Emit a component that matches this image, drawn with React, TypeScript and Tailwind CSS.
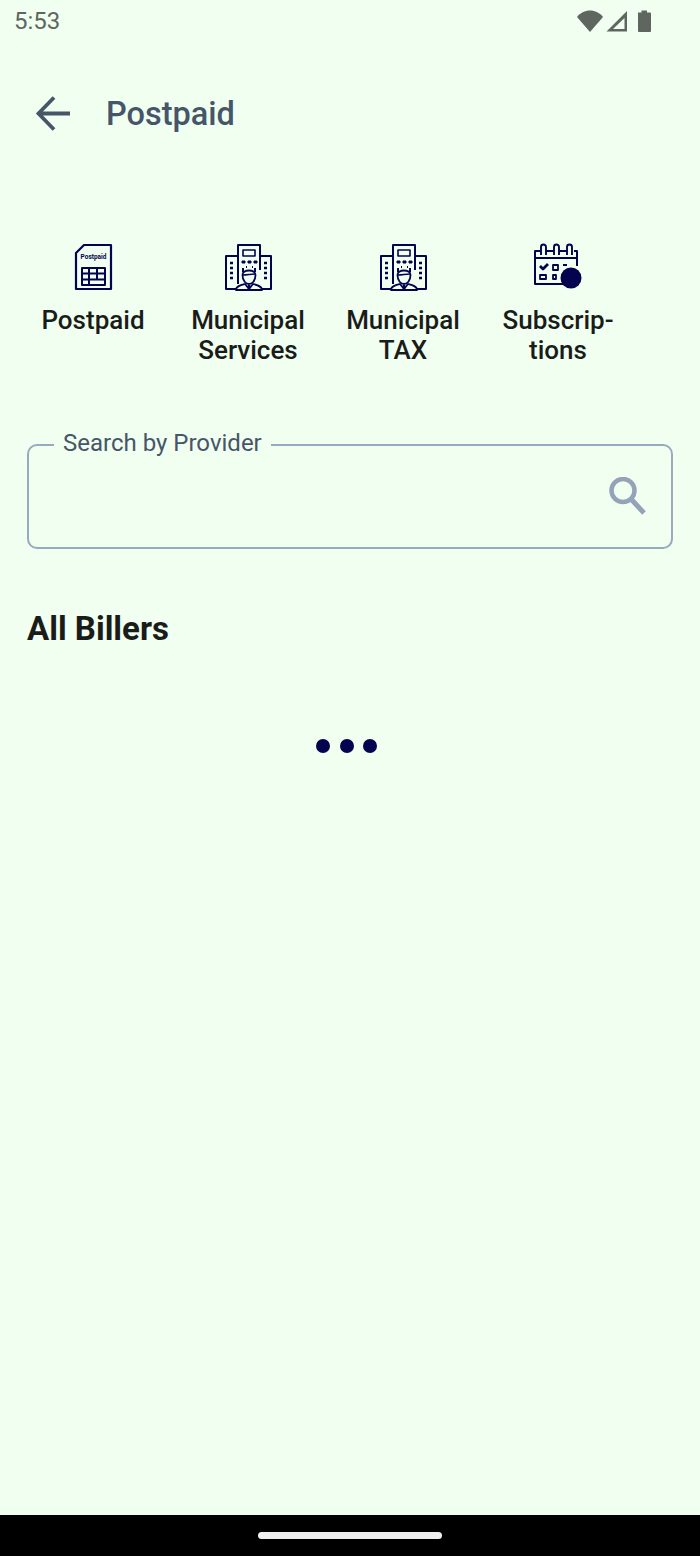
import type { ReactNode } from 'react'

const NAVY = '#03034f'

function Glyph({ children }: { children: ReactNode }) {
  return (
    <svg width="50" height="50" viewBox="0 0 50 50" fill="none" stroke={NAVY} strokeWidth="2" strokeLinejoin="round">
      {children}
    </svg>
  )
}

function SimIcon() {
  return (
    <Glyph>
      <path d="M8 11 L16 3 H43 V47 H8 Z" strokeWidth="2.200" />
      <text x="25.500" y="17" textAnchor="middle" fontSize="6.500" fontWeight="700" fill={NAVY} stroke="none" fontFamily="Roboto, sans-serif">
        Postpaid
      </text>
      <path d="M14 26 H37 V43 H14 Z M14 31.500 H37 M14 37.500 H37 M21 26 V43 M29 26 V37.500" strokeWidth="2" />
    </Glyph>
  )
}

function MunicipalIcon() {
  return (
    <Glyph>
      <path d="M15 42 V3 H37 V28" strokeWidth="2" />
      <path d="M20 8 H32 V14 H20 Z" strokeWidth="1.600" />
      <path d="M19 19 h3 v2 h-3 z M25 19 h3 v2 h-3 z M31 19 h3 v2 h-3 z" fill={NAVY} strokeWidth="1" />
      <path d="M15 14 H3 V47 H13 M37 14 H48 V47 H39" strokeWidth="2" />
      <path d="M7 21 h3 M7 26 h3 M7 31 h3 M7 36 h3 M41 21 h3 M41 26 h3 M41 31 h3 M41 36 h3" strokeWidth="2.600" />
      <path d="M20 26 v4 M32 26 v4 M23 25 h1 M29 25 h1" strokeWidth="2" />
      <path d="M19.500 33 C19.500 27 32.500 27 32.500 33 C32.500 39 29 42 26 42 C23 42 19.500 39 19.500 33 Z" strokeWidth="1.800" />
      <path d="M20 33 C24 33 28 32 32 32" strokeWidth="1.400" />
      <path d="M13 48 C13 44 18 43 22 42 L26 47 L30 42 C34 43 39 44 39 48 Z" strokeWidth="1.800" />
      <path d="M26 43 v5" strokeWidth="2.400" />
    </Glyph>
  )
}

function CalendarIcon() {
  return (
    <Glyph>
      <path d="M7 9 H2 V42 H30 M44 24 V9 H41" strokeWidth="2" />
      <path d="M2 16 H44" strokeWidth="2" />
      <path d="M8 13 V5 a2.500 2.500 0 0 1 5 0 V13 M21 13 V5 a2.500 2.500 0 0 1 5 0 V13 M34 13 V5 a2.500 2.500 0 0 1 5 0 V13" strokeWidth="1.900" />
      <path d="M13 9 H21 M26 9 H34" strokeWidth="1.900" />
      <path d="M7 24 l3 3 l5 -5" strokeWidth="2.800" />
      <path d="M20 23 h5 v5 h-5 z M30 23 h4" strokeWidth="1.800" />
      <path d="M7 33 h6 v4 h-6 z M20 33 h3 v4 h-3 z" strokeWidth="1.800" />
      <circle cx="38" cy="36" r="10.500" fill={NAVY} stroke="none" />
    </Glyph>
  )
}

const categories = [
  { label: ['Postpaid'], icon: <SimIcon /> },
  { label: ['Municipal', 'Services'], icon: <MunicipalIcon /> },
  { label: ['Municipal', 'TAX'], icon: <MunicipalIcon /> },
  { label: ['Subscrip-', 'tions'], icon: <CalendarIcon /> },
]

function StatusBar() {
  return (
    <div className="flex h-[42px] items-center justify-between pl-[14px] pr-[47px] text-[#5f6660]">
      <span className="text-[24px] leading-none">5:53</span>
      <svg width="76" height="24" viewBox="0 0 76 24" fill="#5f6660">
        {/* wifi wedge */}
        <path d="M0 8 C3 4 8 1.500 13 1.500 C18 1.500 23 4 26 8 L13 23 Z" />
        {/* signal triangle with the empty part cut out */}
        <path d="M50 2 V22.500 H29.500 Z M47.500 9 L36 20 H47.500 Z" fillRule="evenodd" />
        {/* battery */}
        <path d="M61 3.500 H64.500 V1.500 H70 V3.500 H73 Q74 3.500 74 4.500 V22 Q74 23 73 23 H62 Q61 23 61 22 Z" />
      </svg>
    </div>
  )
}

export default function App() {
  return (
    <div className="flex h-[1556px] w-[700px] flex-col overflow-hidden bg-[#f0fff0] font-['Roboto',sans-serif]">
      <StatusBar />

      <header className="mt-[30px] flex h-[84px] items-center pl-[35px]">
        <svg width="36" height="36" viewBox="0 0 36 36" fill="none" stroke="#475569" strokeWidth="3.800">
          <path d="M35 17.500 H4 M19 1.500 L3.500 17.500 L19 33.500" />
        </svg>
        <h1 className="ml-[35px] text-[32.500px] leading-none font-medium text-[#475569]">Postpaid</h1>
      </header>

      <div className="mt-[86px] grid grid-cols-[155px_155px_155px_155px] pl-[15.500px]">
        {categories.map((c, i) => (
          <div key={i} className="flex flex-col items-center">
            <div className="h-[50px] w-[50px]">{c.icon}</div>
            <div className="mt-[13px] text-center text-[26px] leading-[30px] font-medium text-[#1a1c1a]">
              {c.label.map((line) => (
                <div key={line}>{line}</div>
              ))}
            </div>
          </div>
        ))}
      </div>

      <div className="relative mx-[27px] mt-[79px] flex h-[105px] items-center justify-end rounded-[10px] border-2 border-[#9aa8c0] pr-[23px]">
        <span className="absolute top-[-17px] left-[25px] bg-[#f0fff0] px-[9px] text-[24px] leading-[28px] text-[#475569]">
          Search by Provider
        </span>
        <svg width="40" height="40" viewBox="0 0 40 40" fill="none" stroke="#94a3b8">
          <circle cx="15" cy="13.500" r="11.500" strokeWidth="4.500" />
          <path d="M23 22 L36 36" strokeWidth="5" />
        </svg>
      </div>

      <h2 className="mt-[61px] ml-[27px] text-[33px] leading-[38px] font-bold text-[#1a1c1a]">All Billers</h2>

      <div className="mt-[90px] flex items-center gap-[9.500px] pl-[316px]">
        <span className="h-[14px] w-[14px] rounded-full bg-[#03034f]" />
        <span className="h-[14px] w-[14px] rounded-full bg-[#03034f]" />
        <span className="mt-[1px] h-[14px] w-[14px] rounded-full bg-[#03034f]" />
      </div>

      <div className="mt-auto flex h-[41px] justify-center bg-black pt-[17px]">
        <div className="h-[7px] w-[184px] rounded-full bg-[#f0f0f0]" />
      </div>
    </div>
  )
}
